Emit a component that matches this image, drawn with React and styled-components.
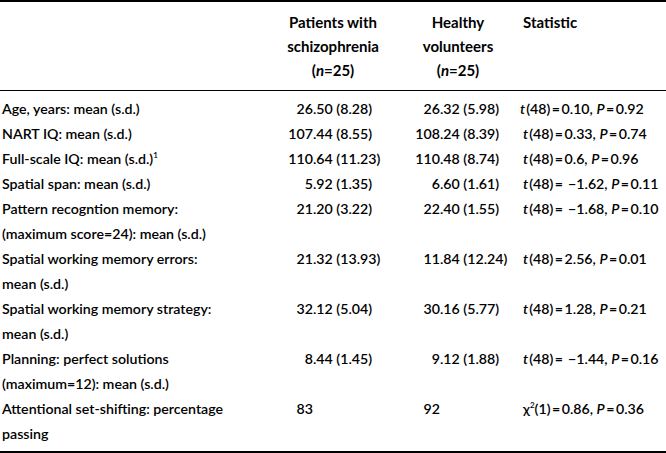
import React from "react";
import styled, { createGlobalStyle } from "styled-components";

const GlobalStyle = createGlobalStyle`
  body {
    margin: 0;
    background: #ffffff;
  }
`;

const rows = [
  { label: ["Age, years: mean (s.d.)"], p: ["26", ".50 (8.28)"], h: ["26", ".32 (5.98)"], stat: ["t", "48", "0.10, ", "0.92"], shift: -11 },
  { label: ["NART IQ: mean (s.d.)"], p: ["107", ".44 (8.55)"], h: ["108", ".24 (8.39)"], stat: ["t", "48", "0.33, ", "0.74"] },
  { label: ["Full-scale IQ: mean (s.d.)"], sup: "1", p: ["110", ".64 (11.23)"], h: ["110", ".48 (8.74)"], stat: ["t", "48", "0.6, ", "0.96"] },
  { label: ["Spatial span: mean (s.d.)"], p: ["5", ".92 (1.35)"], h: ["6", ".60 (1.61)"], stat: ["t", "48", " \u22121.62, ", "0.11"] },
  { label: ["Pattern recogntion memory:", "(maximum score=24): mean (s.d.)"], p: ["21", ".20 (3.22)"], h: ["22", ".40 (1.55)"], stat: ["t", "48", " \u22121.68, ", "0.10"] },
  { label: ["Spatial working memory errors:", "mean (s.d.)"], p: ["21", ".32 (13.93)"], h: ["11", ".84 (12.24)"], stat: ["t", "48", "2.56, ", "0.01"] },
  { label: ["Spatial working memory strategy:", "mean (s.d.)"], p: ["32", ".12 (5.04)"], h: ["30", ".16 (5.77)"], stat: ["t", "48", "1.28, ", "0.21"] },
  { label: ["Planning: perfect solutions", "(maximum=12): mean (s.d.)"], p: ["8", ".44 (1.45)"], h: ["9", ".12 (1.88)"], stat: ["t", "48", " \u22121.44, ", "0.16"] },
  { label: ["Attentional set-shifting: percentage", "passing"], p: ["83", ""], h: ["92", ""], chi: true, stat: ["\u03c7", "1", "0.86, ", "0.36"] },
];

export default function App() {
  return (
    <>
      <GlobalStyle />
      <Table>
        <colgroup>
          <col style={{ width: 270 }} />
          <col style={{ width: 126 }} />
          <col style={{ width: 124 }} />
          <col />
        </colgroup>
        <thead>
          <tr>
            <HeadCell />
            <HeadCell $center>
              Patients with
              <br />
              schizophrenia
              <br />
              (<i>n</i>=25)
            </HeadCell>
            <HeadCell $center>
              Healthy
              <br />
              volunteers
              <br />
              (<i>n</i>=25)
            </HeadCell>
            <HeadCell $stat>Statistic</HeadCell>
          </tr>
        </thead>
        <tbody>
          {rows.map((r, i) => (
            <Row key={i} $first={i === 0} $last={i === rows.length - 1}>
              <Label>
                {r.label.map((l, j) => (
                  <React.Fragment key={j}>
                    {j > 0 && <br />}
                    {l}
                    {r.sup && j === 0 && <Sup>{r.sup}</Sup>}
                  </React.Fragment>
                ))}
              </Label>
              <Value>
                <Int $w={43}>{r.p[0]}</Int>
                {r.p[1]}
              </Value>
              <Value>
                <Int $w={44}>{r.h[0]}</Int>
                {r.h[1]}
              </Value>
              <Stat $shift={r.shift || 0}>
                {r.chi ? (
                  <>
                    {r.stat[0]}
                    <Sup>2</Sup>
                  </>
                ) : (
                  <Var>{r.stat[0]}</Var>
                )}
                ({r.stat[1]})<Eq>=</Eq>
                {r.stat[2]}
                <i>P</i>
                <Eq>=</Eq>
                {r.stat[3]}
              </Stat>
            </Row>
          ))}
        </tbody>
      </Table>
    </>
  );
}

const Table = styled.table`
  width: 666px;
  border-collapse: collapse;
  table-layout: fixed;
  font-family: Lato, "Open Sans", sans-serif;
  font-size: 14.2px;
  color: #000000;
  border-top: 2px solid #000000;
  border-bottom: 2px solid #000000;

  td,
  th {
    padding: 0;
    vertical-align: top;
  }
`;

const HeadCell = styled.th`
  font-size: 15px;
  font-weight: 700;
  line-height: 24px;
  padding: 8px 0 !important;
  text-align: ${(p) => (p.$center ? "center" : "left")};
  padding-left: ${(p) => (p.$stat ? "3px" : "0")} !important;
  border-bottom: 1px solid #000000;
`;

const Row = styled.tr`
  line-height: 25px;

  td {
    padding-top: ${(p) => (p.$first ? "5px" : "0")};
    padding-bottom: ${(p) => (p.$last ? "5px" : "0")};
  }
`;

const Label = styled.td`
  padding-left: 2px !important;
  font-weight: 600;
  white-space: nowrap;
`;

const Value = styled.td`
  font-weight: 600;
  white-space: nowrap;
`;

const Int = styled.span`
  display: inline-block;
  width: ${(p) => p.$w}px;
  text-align: right;
`;

const Stat = styled.td`
  font-weight: 600;
  white-space: nowrap;
  padding-left: ${(p) => 3 + p.$shift}px !important;
`;

const Var = styled.i`
  margin-right: 1px;
`;

const Eq = styled.span`
  margin: 0 1.5px;
`;

const Sup = styled.sup`
  font-size: 8px;
  line-height: 0;
  vertical-align: 6px;
`;
